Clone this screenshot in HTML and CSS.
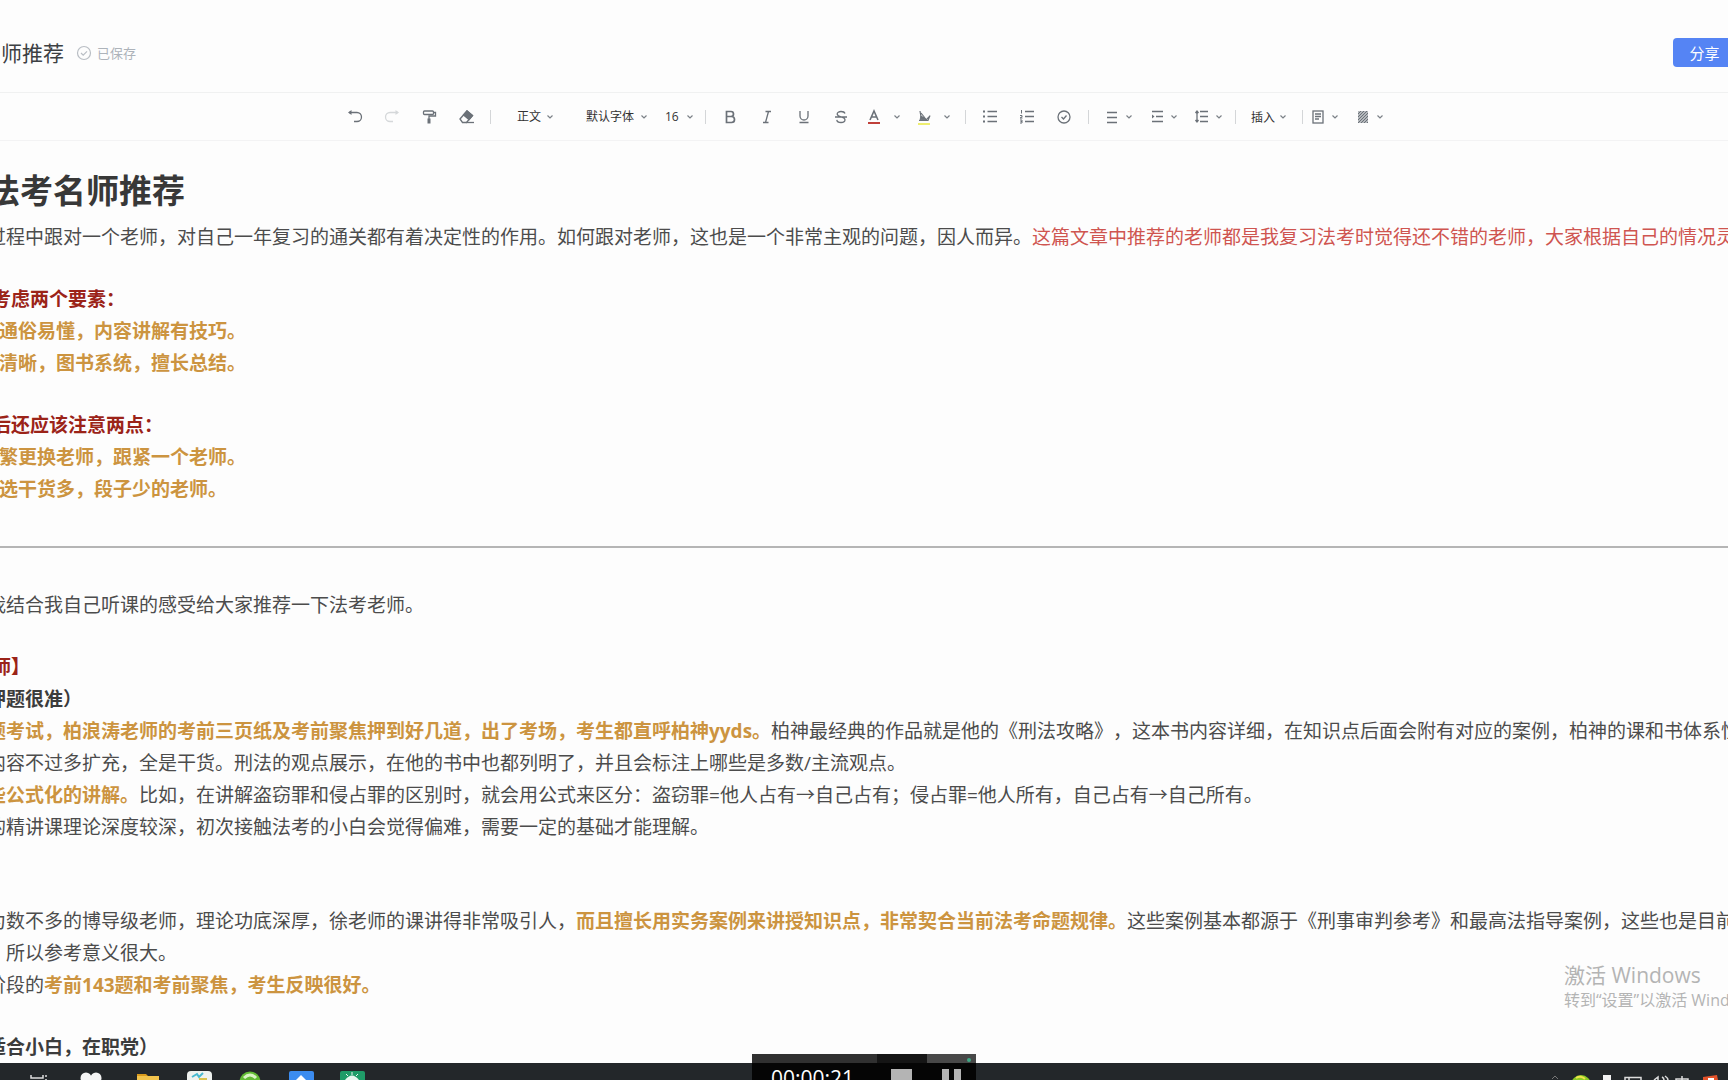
FILE: index.html
```html
<!DOCTYPE html>
<html lang="zh-CN">
<head>
<meta charset="utf-8">
<title>法考名师推荐</title>
<link rel="stylesheet" href="styles.css">
</head>
<body>
<svg class="defs" aria-hidden="true">
  <symbol id="chev" viewBox="0 0 8 8"><path d="M1.5 2.5 4 5l2.500-2.500" fill="none" stroke="currentColor" stroke-width="1.200"/></symbol>
</svg>
<div class="screen">
  <header class="topbar">
    <span class="doc-name">名师推荐</span>
    <svg class="saved-icon" viewBox="0 0 16 16"><circle cx="8" cy="8" r="6.500"/><path d="m5 8 2.200 2.200L11 6.300"/></svg>
    <span class="saved">已保存</span>
    <button class="share" type="button">分享</button>
  </header>

  <div class="toolbar" role="toolbar">
    <button class="tool" type="button" aria-label="撤销"><svg viewBox="0 0 18 18"><path d="M3 4.500h8a4.500 4.500 0 0 1 0 9H8"/><path d="M5.500 2 2 4.500 5.500 7z" fill="currentColor" stroke="none"/></svg></button>
    <button class="tool faded" type="button" aria-label="重做"><svg viewBox="0 0 18 18"><path d="M15 4.500H7a4.500 4.500 0 0 0 0 9h3"/><path d="M12.500 2 16 4.500 12.500 7z" fill="currentColor" stroke="none"/></svg></button>
    <button class="tool" type="button" aria-label="格式刷"><svg viewBox="0 0 18 18"><rect x="3.500" y="3" width="10" height="3.500" rx="1"/><path d="M13.500 4.500H15.500V8H9v3"/><path d="M9 10.500v5" stroke-width="3"/></svg></button>
    <button class="tool" type="button" aria-label="清除格式"><svg viewBox="0 0 18 18"><path d="m3 11 7-8 5.500 4.500-6 7H5.500z"/><path d="m6.500 7 3.500-4 5.500 4.500L12 11.500z" fill="currentColor"/><path d="M9 14.500h8"/></svg></button>
    <span class="sep"></span>
    <label class="picker"><select class="pick-style" aria-label="段落样式"><option>正文</option></select><svg class="chev"><use href="#chev"/></svg></label>
    <label class="picker"><select class="pick-font" aria-label="字体"><option>默认字体</option></select><svg class="chev"><use href="#chev"/></svg></label>
    <label class="picker tight"><select class="pick-size" aria-label="字号"><option>16</option></select><svg class="chev"><use href="#chev"/></svg></label>
    <span class="sep"></span>
    <button class="tool" type="button" aria-label="加粗"><svg viewBox="0 0 18 18"><path d="M5.500 3.500h4.500a2.500 2.500 0 0 1 0 5H5.500zM5.500 8.500h5a3 3 0 0 1 0 6h-5z" stroke-width="1.700"/></svg></button>
    <button class="tool" type="button" aria-label="斜体"><svg viewBox="0 0 18 18"><path d="M7.500 3.500h5.500M5 14.500h5.500M10.500 3.500l-3 11"/></svg></button>
    <button class="tool" type="button" aria-label="下划线"><svg viewBox="0 0 18 18"><path d="M5 3v5a4 4 0 0 0 8 0V3M4.500 14.500h9"/></svg></button>
    <button class="tool" type="button" aria-label="删除线"><svg viewBox="0 0 18 18"><path d="M13 5.500C12.500 4 11 3.500 9 3.500c-2.200 0-3.800 1-3.800 2.500C5.200 9.500 13 8 13 11.700c0 1.700-1.700 2.800-4 2.800s-4-1-4.200-2.700M3 9h12"/></svg></button>
    <span class="split">
      <button class="tool narrow" type="button" aria-label="文字颜色"><svg viewBox="0 0 18 18"><path d="m5 12 4-9 4 9M6.500 9h5" stroke-width="1.600"/><path d="M3 15h12" stroke="#c0403a" stroke-width="2"/></svg></button>
      <button class="drop" type="button" aria-label="选择文字颜色"><svg class="chev"><use href="#chev"/></svg></button>
    </span>
    <span class="split">
      <button class="tool narrow" type="button" aria-label="高亮"><svg viewBox="0 0 18 18"><path d="m5 3 1 6 5 3 4-4M6 5l4 5M4 12.500h9l2-5" stroke-width="1.200"/><path d="m6 8 5 3-6 1z" fill="currentColor" stroke-width="1"/><path d="M3 16h12" stroke="#eeee70" stroke-width="2"/></svg></button>
      <button class="drop" type="button" aria-label="选择高亮颜色"><svg class="chev"><use href="#chev"/></svg></button>
    </span>
    <span class="sep"></span>
    <button class="tool" type="button" aria-label="无序列表"><svg viewBox="0 0 18 18"><path d="M6.500 3.500H16M6.500 8.500H16M6.500 13.500H16"/><path d="M3 2.500v2M3 7.500v2M3 12.500v2" stroke-width="2"/></svg></button>
    <button class="tool" type="button" aria-label="有序列表"><svg viewBox="0 0 18 18"><path d="M7 3.500h9M7 8.500h9M7 13.500h9"/><path d="M3.500 2v3.500M2 7.500h2v1.500l-2 1h2.500M2 12h2v3H2M2.500 13.500H4" stroke-width="1"/></svg></button>
    <button class="tool" type="button" aria-label="任务列表"><svg viewBox="0 0 18 18"><circle cx="9" cy="9" r="6"/><path d="m6.500 9 2 2 3-3.500"/></svg></button>
    <span class="sep"></span>
    <button class="menu" type="button" aria-label="对齐"><svg viewBox="0 0 18 18"><path d="M4 4.500h10M4 9.500h10M4 14.500h10"/></svg><svg class="chev"><use href="#chev"/></svg></button>
    <button class="menu" type="button" aria-label="缩进"><svg viewBox="0 0 18 18"><path d="M4 3.500h11M8 8.500h7M4 13.500h11"/><path d="M4 6.500v4l2.500-2z" fill="currentColor" stroke="none"/></svg><svg class="chev"><use href="#chev"/></svg></button>
    <button class="menu" type="button" aria-label="行高"><svg viewBox="0 0 18 18"><path d="M7 3.500h8M7 8.500h8M7 13.500h8M4 3.500v10M2.500 5 4 3l1.500 2M2.500 12 4 14l1.500-2"/></svg><svg class="chev"><use href="#chev"/></svg></button>
    <span class="sep"></span>
    <button class="insert" type="button">插入<svg class="chev"><use href="#chev"/></svg></button>
    <span class="sep"></span>
    <button class="menu flush" type="button" aria-label="页面"><svg viewBox="0 0 18 18"><rect x="4" y="3" width="10" height="12"/><path d="M6 6h6M6 8.500h6M6 11h4"/></svg><svg class="chev"><use href="#chev"/></svg></button>
    <button class="menu flush" type="button" aria-label="背景"><svg viewBox="0 0 18 18"><path d="M4 3h10v12H4z" fill="#b4b8bc" stroke="none"/><path d="m4 6 3-3M4 9l6-6M4 12l9-9M4 15 14 5M7 15l7-7M10 15l4-4M13 15l1-1" stroke-width="1"/></svg><svg class="chev"><use href="#chev"/></svg></button>
  </div>

  <main class="doc">
    <h1>法考名师推荐</h1>
    <section>
      <p>过程中跟对一个老师，对自己一年复习的通关都有着决定性的作用。如何跟对老师，这也是一个非常主观的问题，因人而异。<span class="red">这篇文章中推荐的老师都是我复习法考时觉得还不错的老师，大家根据自己的情况灵活</span></p>
    </section>
    <section>
      <h2>考虑两个要素：</h2>
      <p class="point">通俗易懂，内容讲解有技巧。</p>
      <p class="point">清晰，图书系统，擅长总结。</p>
    </section>
    <section>
      <h2>后还应该注意两点：</h2>
      <p class="point">繁更换老师，跟紧一个老师。</p>
      <p class="point">选干货多，段子少的老师。</p>
    </section>
    <hr>
    <section>
      <p>我结合我自己听课的感受给大家推荐一下法考老师。</p>
    </section>
    <section>
      <h2>师】</h2>
      <p><b>押题很准）</b></p>
      <p><b class="gold">题考试，柏浪涛老师的考前三页纸及考前聚焦押到好几道，出了考场，考生都直呼柏神yyds。</b>柏神最经典的作品就是他的《刑法攻略》，这本书内容详细，在知识点后面会附有对应的案例，柏神的课和书体系性强</p>
      <p>内容不过多扩充，全是干货。刑法的观点展示，在他的书中也都列明了，并且会标注上哪些是多数/主流观点。</p>
      <p><b class="gold">些公式化的讲解。</b>比如，在讲解盗窃罪和侵占罪的区别时，就会用公式来区分：盗窃罪=他人占有→自己占有；侵占罪=他人所有，自己占有→自己所有。</p>
      <p>的精讲课理论深度较深，初次接触法考的小白会觉得偏难，需要一定的基础才能理解。</p>
    </section>
    <section class="apart">
      <p>为数不多的博导级老师，理论功底深厚，徐老师的课讲得非常吸引人，<b class="gold">而且擅长用实务案例来讲授知识点，非常契合当前法考命题规律。</b>这些案例基本都源于《刑事审判参考》和最高法指导案例，这些也是目前法</p>
      <p>，所以参考意义很大。</p>
      <p>阶段的<b class="gold">考前143题和考前聚焦，考生反映很好。</b></p>
    </section>
    <section>
      <p><b>适合小白，在职党）</b></p>
    </section>
  </main>

  <footer class="taskbar">
    <div class="apps">
      <svg viewBox="0 0 26 17"><path d="M5 12v3h12v-3M5 20v-1h12M20 12v2M20 16v1" fill="none" stroke="#ddd" stroke-width="1.500"/></svg>
      <svg viewBox="0 0 26 17"><circle cx="9" cy="15" r="5.500" fill="#f4f4f4"/><circle cx="19" cy="15" r="5.500" fill="#f4f4f4"/></svg>
      <svg class="after-gap" viewBox="0 0 26 17"><path d="M2 11h9l2 2h11v4H2z" fill="#d99a1c"/><path d="M2 13h22v4H2z" fill="#f2c34c"/></svg>
      <svg viewBox="0 0 26 17"><rect x="1" y="8" width="25" height="20" rx="4" fill="#eef1ee"/><path d="m6 14 5-3 2 3 4-4" fill="none" stroke="#47b9cf" stroke-width="2"/><path d="M13 16h8" stroke="#d9c24a" stroke-width="2"/></svg>
      <svg viewBox="0 0 26 17"><circle cx="13" cy="19" r="10.500" fill="#62bb34"/><path d="M7 15q6-6 12 0" fill="none" stroke="#d9f3c4" stroke-width="3"/></svg>
      <svg viewBox="0 0 26 17"><rect x="1" y="8" width="25" height="20" rx="2" fill="#3b8cf0"/><path d="m13 12 5 5H8z" fill="#fff"/></svg>
      <svg viewBox="0 0 26 17"><rect x="1" y="8" width="25" height="20" rx="2" fill="#1f9c68"/><path d="M6 17q7-9 14 0z" fill="#e9f6ef"/><path d="m7 11 2 2M13 9v3M19 11l-2 2" stroke="#e9f6ef"/></svg>
    </div>
    <div class="tray">
      <svg viewBox="0 0 26 17"><path d="m10 16 3-3 3 3" fill="none" stroke="#777"/></svg>
      <svg viewBox="0 0 26 17"><circle cx="13" cy="22" r="10" fill="#8bc926"/><path d="M8 15q5-3 9 1" fill="none" stroke="#f0e34a" stroke-width="2"/></svg>
      <svg viewBox="0 0 26 17"><path d="M9 12h8v5H9z" fill="#f2f2f2"/></svg>
      <svg viewBox="0 0 26 17"><path d="M5 17v-2.500h16V17M9 15v2" fill="none" stroke="#ddd" stroke-width="1.500"/></svg>
      <svg viewBox="0 0 26 17"><path d="m8 17 4-3v3M16 14q2 1 2 3M19 13q3 2 3 4" fill="none" stroke="#ddd" stroke-width="1.500"/></svg>
      <svg viewBox="0 0 26 17"><path d="M10 13v4M4 17v-1h12v1" fill="none" stroke="#ddd" stroke-width="1.500"/></svg>
      <svg viewBox="0 0 26 17"><path d="m5 14 14-2 1 5H5z" fill="#e4532b"/><path d="M10 16h6" stroke="#fff" stroke-width="2"/></svg>
    </div>
  </footer>

  <aside class="watermark"><div class="wm-title">激活 Windows</div><div class="wm-note">转到“设置”以激活 Windows。</div></aside>

  <div class="recorder">
    <span class="time">00:00:21</span>
    <button class="rec-btn stop" type="button" aria-label="停止"><svg viewBox="0 0 22 22"><path d="M0 0h21v21H0z"/></svg></button>
    <button class="rec-btn pause" type="button" aria-label="暂停"><svg viewBox="0 0 22 22"><path d="M1 0h7v21H1zM13 0h7v21h-7z"/></svg><i class="dot"></i></button>
  </div>
</div>
</body>
</html>
```
FILE: styles.css
```css
* { box-sizing: border-box; }

body {
  margin: 0;
  background: #fdfdfd;
  color: #4c4c4c;
  font-family: "Open Sans", "Noto Sans CJK SC", sans-serif;
  text-spacing-trim: space-all;
}

button, select {
  margin: 0;
  padding: 0;
  border: 0;
  background: none;
  color: inherit;
  font: inherit;
}

.defs { position: absolute; width: 0; height: 0; }

.screen {
  position: relative;
  display: grid;
  grid-template-rows: 93px 48px 1fr 17px;
  height: 100vh;
  overflow: hidden;
}

/* title bar */
.topbar {
  display: flex;
  align-items: center;
  padding-top: 13px;
  border-bottom: 1px solid #f0f1f1;
}
.topbar, .toolbar, .doc { min-width: 0; }
.doc-name {
  margin-left: -20px;
  font-size: 21px;
  line-height: 28px;
  color: #3c4043;
}
.saved-icon {
  width: 16px;
  height: 16px;
  margin: 0 5px 0 12px;
  fill: none;
  stroke: #b9bec4;
  stroke-width: 1.2;
}
.saved { font-size: 13px; color: #adb3ba; }
.share {
  width: 63px;
  height: 29px;
  margin: 0 -8px 0 auto;
  border-radius: 4px;
  background: #5584f4;
  color: #fff;
  font-size: 15px;
}

/* formatting toolbar */
.toolbar {
  display: flex;
  align-items: center;
  justify-content: center;
  padding-left: 7px;
  border-bottom: 1px solid #f3f3f4;
  color: #6b7178;
  font-size: 13px;
}
.toolbar svg {
  flex: none;
  width: 18px;
  height: 18px;
  fill: none;
  stroke: currentColor;
  stroke-width: 1.3;
}
.toolbar .chev { width: 8px; height: 8px; color: #7b8187; }
.tool {
  display: flex;
  justify-content: center;
  width: 37px;
}
.tool.narrow { width: 28px; }
.faded { color: #d5d8da; }
.sep {
  width: 12px;
  height: 14px;
  background: linear-gradient(#d4d6d8, #d4d6d8) center / 1px 100% no-repeat;
}
.picker {
  display: flex;
  align-items: center;
  padding: 0 12px 0 20px;
}
.picker.tight { padding: 0 6px 0 5px; }
.picker select {
  appearance: none;
  color: #333;
  font-size: 12px;
}
.pick-style { width: 29px; }
.pick-font { width: 54px; }
.pick-size { width: 21px; }
.split { display: flex; align-items: center; margin-right: 4px; }
.drop { display: flex; justify-content: center; width: 18px; }
.menu {
  display: flex;
  align-items: center;
  gap: 4px;
  width: 45px;
  padding-left: 8px;
}
.menu.flush { padding-left: 1px; }
.insert {
  display: flex;
  align-items: center;
  gap: 4px;
  padding: 0 9px;
  color: #333;
  font-size: 12px;
}

/* document, scrolled sideways past its left margin */
.doc {
  margin-left: -13px;
  padding-top: 26px;
  overflow: hidden;
  font-size: 19px;
  line-height: 32px;
  white-space: nowrap;
}
h1 {
  margin: 0 0 6px;
  font-size: 33px;
  line-height: 48px;
  color: #383838;
}
section { margin-bottom: 30px; }
.apart { margin-top: 62px; }
p { margin: 0; }
b { color: #3c3c3c; }
h2 {
  margin: 0 0 0 5px;
  font-size: 19px;
  line-height: 32px;
  color: #9b2318;
}
.point { margin-left: 12px; font-weight: 700; color: #cc9440; }
.gold { color: #cc9440; }
.red { color: #cf5550; }
hr {
  height: 2px;
  margin: 41px 0;
  border: 0;
  background: #b5b5b5;
}

/* desktop taskbar */
.taskbar {
  display: flex;
  justify-content: space-between;
  padding: 0 4px 0 14px;
  background: #23272a;
}
.taskbar svg { flex: none; width: 26px; height: 17px; }
.apps { display: flex; gap: 25px; padding-left: 12px; }
.after-gap { margin-left: 7px; }
.tray { display: flex; }

/* overlays */
.watermark {
  position: absolute;
  left: calc(100% - 164px);
  bottom: 69px;
  color: #b4b4b4;
  white-space: nowrap;
}
.wm-title { font-size: 21px; line-height: 28px; }
.wm-note { font-size: 16px; line-height: 22px; }

.recorder {
  position: absolute;
  left: calc(50% - 112px);
  bottom: 0;
  display: flex;
  width: 224px;
  height: 26px;
  overflow: hidden;
  background: linear-gradient(#303030 9px, #050505 9px);
}
.time {
  width: 125px;
  padding-left: 19px;
  color: #fff;
  font-size: 21px;
  line-height: 48px;
}
.rec-btn { display: flex; padding: 15px 0 0 14px; }
.rec-btn svg { flex: none; width: 22px; height: 22px; fill: #b4b4b4; }
.stop { width: 50px; background: linear-gradient(#151515 9px, #050505 9px); }
.pause { position: relative; width: 49px; background: linear-gradient(#484848 9px, #050505 9px); }
.dot {
  position: absolute;
  top: 4px;
  right: 5px;
  width: 4px;
  height: 4px;
  border-radius: 50%;
  background: #3fa986;
}
```
